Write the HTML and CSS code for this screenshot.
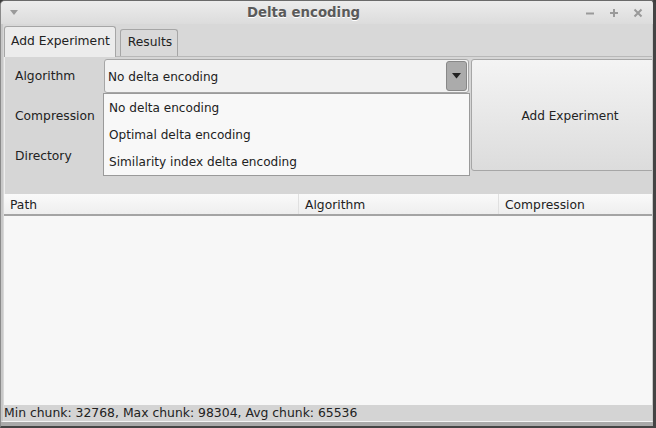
FILE: index.html
```html
<!DOCTYPE html>
<html>
<head>
<meta charset="utf-8">
<link rel="stylesheet" href="styles.css">
</head>
<body>
<div class="window">
  <div class="titlebar">
    <span class="menu-tri"></span>
    <span class="title">Delta encoding</span>
    <div class="wbtns">
      <svg width="10" height="10" viewBox="0 0 10 10"><path d="M1 5.5H9" stroke="#9a9a9a" stroke-width="2"/></svg>
      <svg width="10" height="10" viewBox="0 0 10 10"><path d="M1 5H9M5 1V9" stroke="#9a9a9a" stroke-width="2"/></svg>
      <svg width="10" height="10" viewBox="0 0 10 10"><path d="M1.5 1.5L8.5 8.5M8.5 1.5L1.5 8.5" stroke="#9a9a9a" stroke-width="2"/></svg>
    </div>
  </div>
  <div class="content">
    <div class="tabs">
      <div class="tab active">Add Experiment</div>
      <div class="tab">Results</div>
    </div>
    <div class="pane">
      <div class="form">
        <div class="labels">
          <div class="lbl">Algorithm</div>
          <div class="lbl">Compression</div>
          <div class="lbl">Directory</div>
        </div>
        <div class="fields">
          <div class="combo">
            <span class="combo-text">No delta encoding</span>
            <span class="combo-btn"><svg width="9" height="6" viewBox="0 0 9 6"><path d="M0 0H9L4.5 5.5Z" fill="#222"/></svg></span>
          </div>
          <div class="popup">
            <div class="item">No delta encoding</div>
            <div class="item">Optimal delta encoding</div>
            <div class="item">Similarity index delta encoding</div>
          </div>
        </div>
        <div class="addwrap">
          <div class="addbtn">Add Experiment</div>
        </div>
      </div>
    </div>
    <div class="table">
      <div class="thead">
        <div class="th c1">Path</div>
        <div class="th c2">Algorithm</div>
        <div class="th c3">Compression</div>
      </div>
      <div class="tbody"></div>
    </div>
    <div class="status">Min chunk: 32768, Max chunk: 98304, Avg chunk: 65536</div>
  </div>
</div>
</body>
</html>
```
FILE: styles.css
```css
html, body {
  margin: 0;
  padding: 0;
  background: #3c3c3c;
}
body {
  font-family: "DejaVu Sans", sans-serif;
  font-size: 12px;
  color: #222;
}
.window {
  width: 656px;
  height: 428px;
  box-sizing: border-box;
  border-radius: 5px 5px 0 0;
  background: #a9a9a9;
  border-top: 1px solid #6a6a6a;
  border-right: 3px solid #444;
  border-bottom: 2px solid #444;
  border-left: 1px solid #8a8a8a;
  display: flex;
  flex-direction: column;
  overflow: hidden;
}
.titlebar {
  height: 23px;
  flex: none;
  display: flex;
  align-items: center;
  position: relative;
  background: linear-gradient(#ececec, #dcdcdc);
}
.menu-tri {
  width: 0;
  height: 0;
  margin-left: 9px;
  border-left: 4px solid transparent;
  border-right: 4px solid transparent;
  border-top: 5px solid #9a9a9a;
}
.title {
  position: absolute;
  left: 246px;
  top: 4px;
  font-weight: bold;
  font-size: 13.3px;
  color: #5a5a5a;
  text-shadow: 0 1px 0 #fff;
}
.wbtns {
  margin-left: auto;
  margin-right: 10px;
  display: flex;
  gap: 14px;
}
.content {
  flex: 1;
  display: flex;
  flex-direction: column;
  background: #d8d8d8;
  border-left: 2px solid #c8c8c8;
  border-right: 1px solid #c8c8c8;
  border-bottom: 1px solid #f4f4f4;
  margin-bottom: 4px;
  padding-left: 1px;
  min-height: 0;
}
.tabs {
  height: 32px;
  flex: none;
  display: flex;
  align-items: flex-end;
  gap: 4px;
  padding-left: 0;
}
.tab {
  height: 27px;
  box-sizing: border-box;
  padding: 5px 5px 0 7px;
  border: 1px solid #a6a6a6;
  border-bottom: none;
  border-radius: 3px 3px 0 0;
  background: #d9d9d9;
  font-size: 12.3px;
}
.tab.active {
  height: 31px;
  padding: 7px 5px 0 6px;
  background: #ececec;
  position: relative;
  top: 1px;
}
.pane {
  flex: none;
  height: 138px;
  box-sizing: border-box;
  border-top: 1px solid #b8b8b8;
  border-left: 1px solid #eee;
  padding-top: 2px;
  background: #d6d6d6;
}
.form {
  display: flex;
  height: 114px;
}
.labels {
  width: 98px;
  padding-left: 10px;
  padding-top: 1px;
  box-sizing: border-box;
  font-size: 12.3px;
}
.lbl {
  height: 40px;
  line-height: 33px;
}
.fields {
  width: 365px;
  margin-left: 1px;
  position: relative;
}
.combo {
  height: 34px;
  box-sizing: border-box;
  border: 1px solid #a6a6a6;
  border-radius: 3px;
  background: #f2f2f2;
  display: flex;
  align-items: center;
  padding: 1px 1px 0 3px;
  font-size: 12.1px;
}
.combo-text {
  flex: 1;
}
.combo-btn {
  width: 21px;
  height: 30px;
  margin-top: -1px;
  box-sizing: border-box;
  border: 1px solid #888;
  border-radius: 3px;
  background: #ababab;
  display: flex;
  align-items: center;
  justify-content: center;
}
.popup {
  position: absolute;
  left: -1px;
  top: 34px;
  width: 367px;
  height: 83px;
  box-sizing: border-box;
  border: 1px solid #9a9a9a;
  background: #f8f8f8;
  padding-top: 6px;
  font-size: 12.1px;
  z-index: 2;
}
.item {
  height: 27px;
  line-height: 17px;
  padding-left: 5px;
}
.addwrap {
  flex: 1;
  margin-left: 2px;
  overflow: hidden;
}
.addbtn {
  width: 198px;
  height: 112px;
  box-sizing: border-box;
  border: 1px solid #a6a6a6;
  border-radius: 3px;
  background: linear-gradient(#f4f4f4, #dcdcdc);
  text-align: center;
  padding-top: 49px;
  font-size: 12.1px;
}
.table {
  flex: 1;
  display: flex;
  flex-direction: column;
  min-height: 0;
}
.thead {
  height: 22px;
  flex: none;
  display: flex;
  background: linear-gradient(#fafafa, #eeeeee);
  border-bottom: 2px solid #a4a4a4;
  box-sizing: border-box;
  font-size: 12.3px;
}
.th {
  line-height: 22px;
  padding-left: 6px;
  box-sizing: border-box;
  border-right: 1px solid #e0e0e0;
}
.c1 { width: 295px; }
.c2 { width: 200px; }
.c3 { flex: 1; border-right: none; }
.tbody {
  flex: 1;
  background: #f7f7f7;
}
.status {
  height: 16px;
  flex: none;
  background: #d4d4d4;
  line-height: 16px;
  font-size: 12.4px;
  padding-left: 0;
}
```
